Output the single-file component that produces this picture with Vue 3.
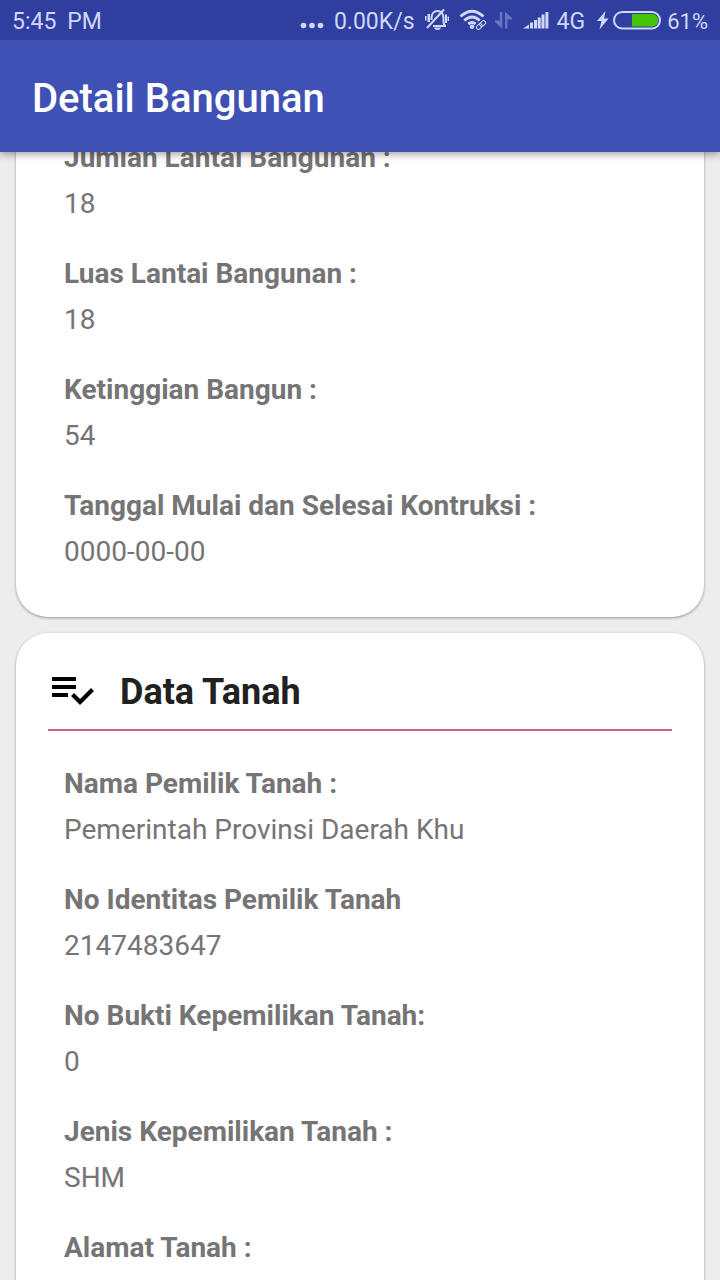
<script setup>
const buildingFields = [
  { label: 'Jumlah Lantai Bangunan :', value: '18' },
  { label: 'Luas Lantai Bangunan :', value: '18' },
  { label: 'Ketinggian Bangun :', value: '54' },
  { label: 'Tanggal Mulai dan Selesai Kontruksi :', value: '0000-00-00' },
]
const landFields = [
  { label: 'Nama Pemilik Tanah :', value: 'Pemerintah Provinsi Daerah Khu' },
  { label: 'No Identitas Pemilik Tanah', value: '2147483647' },
  { label: 'No Bukti Kepemilikan Tanah:', value: '0' },
  { label: 'Jenis Kepemilikan Tanah :', value: 'SHM' },
  { label: 'Alamat Tanah :', value: '' },
]
</script>

<template>
  <div class="screen">
    <div class="status">
      <span class="time"><span>5:45</span><span>PM</span></span>
      <span class="indicators">
        <svg class="dots" width="24" height="28" viewBox="0 0 24 28" aria-hidden="true">
          <circle cx="3.5" cy="19.5" r="2.8" /><circle cx="12" cy="19.5" r="2.8" /><circle cx="20.5" cy="19.5" r="2.8" />
        </svg>
        <span class="speed">0.00K/s</span>
        <svg class="bell" width="24" height="28" viewBox="0 0 24 28" aria-hidden="true">
          <path class="line" d="M8 20h13M6.500 14v-2c0-4 2.500-7 6-7s6 3 6 7v4c0 2 .5 3 2 4M2 22L19 3.500" />
          <path d="M9 21.500h7c-.5 1.700-1.500 2.500-3.500 2.500s-3-.8-3.500-2.500zM2.500 8H5v8H2.500zM0 10h1.500v4.500H0zM20 8.500h2V17h-2zM22.500 10.500H24V15h-1.500z" />
        </svg>
        <svg class="wifi" width="28" height="28" viewBox="0 0 28 28" aria-hidden="true">
          <path class="arc" d="M1.500 10.500Q13 0 24.500 10.500M5.300 14.500Q13 7.500 20.700 14.500M9.300 18Q13 15 16.500 18" />
          <circle cx="13" cy="20.700" r="2.300" />
          <g class="link" transform="rotate(-42 22 19)">
            <rect x="16.500" y="17" width="6.500" height="4" rx="2" /><rect x="21" y="17" width="6.500" height="4" rx="2" />
          </g>
        </svg>
        <svg class="arrows" width="18" height="28" viewBox="0 0 18 28" aria-hidden="true">
          <path d="M4.800 6h2.500v17L0 16v-1.500h4.800zM10 22.500V5.500l7 6.500v1.500h-4.500v9z" />
        </svg>
        <svg class="signal" width="26" height="28" viewBox="0 0 26 28" aria-hidden="true">
          <path d="M0 22.500l6-4v4zM7 16.500h3v6H7zM11 14h3v8.500h-3zM14.700 11.500h3v11h-3zM18.500 8.500h3v14h-3zM22.400 6h3v16.500h-3z" />
        </svg>
        <span class="network">4G</span>
        <svg class="bolt" width="12" height="28" viewBox="0 0 12 28" aria-hidden="true">
          <path d="M8.500 5L0 15h4.500L2.500 23.500 11.500 12.500H7z" />
        </svg>
        <svg class="battery" width="48" height="28" viewBox="0 0 48 28" aria-hidden="true">
          <rect class="shell" x="1" y="6" width="46" height="16.500" rx="8.200" />
          <path class="charge" d="M19 8h20a6.200 6.200 0 0 1 0 12.500H19z" />
        </svg>
        <span class="percent">61%</span>
      </span>
    </div>
    <header class="appbar"><h1>Detail Bangunan</h1></header>

    <main class="content">
      <section class="card building">
        <dl class="fields">
          <div v-for="f in buildingFields" :key="f.label">
            <dt>{{ f.label }}</dt>
            <dd>{{ f.value }}</dd>
          </div>
        </dl>
      </section>

      <section class="card land">
        <div class="heading">
          <svg width="48" height="48" viewBox="0 0 24 24" aria-hidden="true">
            <path d="M14 10H2v2h12v-2zm0-4H2v2h12V6zM2 16h8v-2H2v2zm19.500-4.500L23 13l-6.990 7-4.510-4.500L13 14l3.010 3 5.490-5.500z" />
          </svg>
          <h2>Data Tanah</h2>
        </div>
        <dl class="fields">
          <div v-for="f in landFields" :key="f.label">
            <dt>{{ f.label }}</dt>
            <dd>{{ f.value }}</dd>
          </div>
        </dl>
      </section>
    </main>
  </div>
</template>

<style>
body {
  margin: 0;
  background: #ededed;
}
</style>

<style scoped>
.screen {
  display: flex;
  flex-direction: column;
  height: 100vh;
  overflow: hidden;
  background: #ededed;
  font-family: Roboto, "Noto Sans", sans-serif;
}
.status {
  display: flex;
  flex: none;
  justify-content: space-between;
  align-items: center;
  height: 40px;
  padding: 0 12px;
  background: #303f9f;
  color: #cfd8fc;
  font-size: 23px;
  position: relative;
  z-index: 2;
}
.status span {
  line-height: 36px;
}
.time,
.speed,
.network,
.percent {
  padding-top: 4px;
}
.time {
  display: flex;
  gap: 11px;
}
.indicators {
  display: flex;
  align-items: center;
}
.indicators svg {
  flex: none;
  fill: #cfd8fc;
}
.speed {
  margin: 0 10px;
}
.percent {
  font-size: 22px;
}
.line,
.arc,
.link rect,
.indicators .shell {
  fill: none;
  stroke: #cfd8fc;
  stroke-width: 2;
}
.indicators .arc {
  stroke-width: 3;
}
.link rect {
  stroke-width: 1;
}
.wifi {
  margin-left: 10px;
}
.indicators .arrows {
  margin: 0 10px 0 8px;
  fill: #6874c4;
}
.network {
  margin: 0 12px 0 8px;
}
.battery {
  margin: 0 6px 0 4px;
}
.indicators .charge {
  fill: #45c408;
}
.appbar {
  display: flex;
  flex: none;
  align-items: center;
  box-sizing: border-box;
  height: 112px;
  padding: 6px 32px 0;
  background: #3f51b5;
  color: #fff;
  box-shadow: 0 2px 8px rgba(0, 0, 0, 0.4);
  position: relative;
  z-index: 1;
}
h1 {
  margin: 0;
  font-size: 40px;
  line-height: 48px;
  font-weight: 500;
}
.content {
  display: flex;
  flex: 1;
  flex-direction: column;
  gap: 16px;
  min-height: 0;
  padding: 0 16px;
}
.card {
  flex: none;
  border-radius: 32px;
  background: #fff;
  box-shadow: 0 1px 3px rgba(0, 0, 0, 0.38);
}
.building {
  margin-top: -63px;
  padding: 50px 32px 46px;
}
.land {
  padding: 32px;
}
.heading {
  display: flex;
  align-items: center;
  gap: 24px;
  padding-bottom: 14px;
  border-bottom: 2px solid #da5a8c;
  margin-bottom: 34px;
}
.heading svg {
  margin-bottom: 2px;
}
h2 {
  margin: 0;
  padding-top: 4px;
  color: #212121;
  font-size: 36px;
  line-height: 46px;
  font-weight: 700;
}
.fields {
  display: flex;
  flex-direction: column;
  gap: 32px;
  margin: 0;
  padding: 0 16px;
  color: #757575;
  font-size: 28px;
  line-height: 38px;
}
dt {
  font-weight: 700;
}
dd {
  min-height: 38px;
  margin: 8px 0 0;
}
</style>
